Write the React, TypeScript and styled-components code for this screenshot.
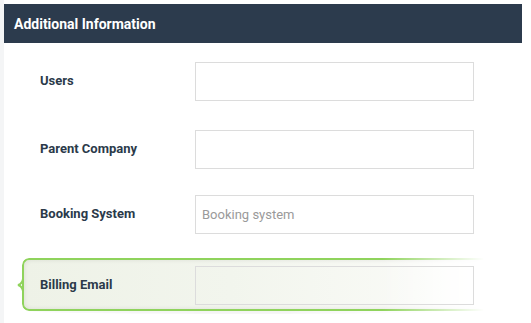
import React from "react";
import styled, { createGlobalStyle } from "styled-components";

const Global = createGlobalStyle`
  html, body { margin: 0; padding: 0; background: #ffffff; }
  body { font-family: Roboto, "Noto Sans", Arial, sans-serif; }
`;

const Page = styled.div`
  width: 531px;
  height: 323px;
  box-sizing: border-box;
  border-left: 4px solid #f4f5f6;
  padding-top: 4px;
  overflow: hidden;
`;

const Panel = styled.section`
  width: 518px;
  background: #ffffff;
`;

const Header = styled.header`
  height: 39px;
  background: #2c3b4d;
  color: #ffffff;
  display: flex;
  align-items: center;
  padding-left: 10px;
  font-size: 14px;
  font-weight: 700;
`;

const Form = styled.div`
  display: flex;
  flex-direction: column;
  padding-top: 19px;
`;

const Row = styled.div<{ $gap: number }>`
  position: relative;
  display: flex;
  align-items: center;
  margin-top: ${(p) => p.$gap}px;
  padding-left: 36px;
`;

const HighlightRow = styled(Row)`
  margin-left: 18px;
  padding-left: 18px;
  padding-top: 8px;
  padding-bottom: 6px;
  &::after {
    content: "";
    position: absolute;
    left: 2px;
    right: 60px;
    bottom: -3px;
    height: 6px;
    border-radius: 50%;
    background: rgba(0, 0, 0, 0.05);
    filter: blur(2px);
    -webkit-mask-image: linear-gradient(to right, #000 60%, transparent 100%);
    mask-image: linear-gradient(to right, #000 60%, transparent 100%);
  }
  &::before {
    content: "";
    position: absolute;
    z-index: 1;
    left: 0;
    top: 0;
    bottom: 0;
    width: 462px;
    box-sizing: border-box;
    border: 2px solid #8fd35c;
    border-right: none;
    border-radius: 7px 0 0 7px;
    background: linear-gradient(to right, #eef2e7 0%, #f2f5ed 45%, #f9faf6 85%, #ffffff 100%);
    box-shadow: inset 0 0 5px rgba(0, 0, 0, 0.09);
    -webkit-mask-image: linear-gradient(to right, #000 78%, transparent 100%);
    mask-image: linear-gradient(to right, #000 78%, transparent 100%);
  }
`;

const Notch = styled.svg`
  position: absolute;
  z-index: 2;
  left: -5px;
  top: 50%;
  margin-top: -6px;
`;

const Label = styled.label`
  position: relative;
  z-index: 2;
  width: 155px;
  margin-top: -2px;
  font-size: 13px;
  font-weight: 700;
  color: #2b3a4a;
`;

const Input = styled.input<{ $clear?: boolean }>`
  position: relative;
  z-index: 2;
  width: 279px;
  height: 39px;
  box-sizing: border-box;
  border: 1px solid #dcdcdc;
  background: ${(p) => (p.$clear ? "transparent" : "#ffffff")};
  padding: 0 6px;
  font-family: Roboto, "Noto Sans", Arial, sans-serif;
  font-size: 13px;
  color: #333;
  outline: none;
  &::placeholder { color: #9a9a9a; }
`;

export default function App() {
  return (
    <>
      <Global />
      <Page>
        <Panel>
          <Header>Additional Information</Header>
          <Form>
            <Row $gap={0}>
              <Label>Users</Label>
              <Input />
            </Row>
            <Row $gap={29}>
              <Label>Parent Company</Label>
              <Input />
            </Row>
            <Row $gap={26}>
              <Label>Booking System</Label>
              <Input placeholder="Booking system" />
            </Row>
            <HighlightRow $gap={24}>
              <Notch width="7" height="12" viewBox="0 0 7 12">
                <path d="M6 0 Q5 5 1 6 Q5 7 6 12" fill="none" stroke="#8fd35c" strokeWidth="2" />
              </Notch>
              <Label>Billing Email</Label>
              <Input $clear />
            </HighlightRow>
          </Form>
        </Panel>
      </Page>
    </>
  );
}
